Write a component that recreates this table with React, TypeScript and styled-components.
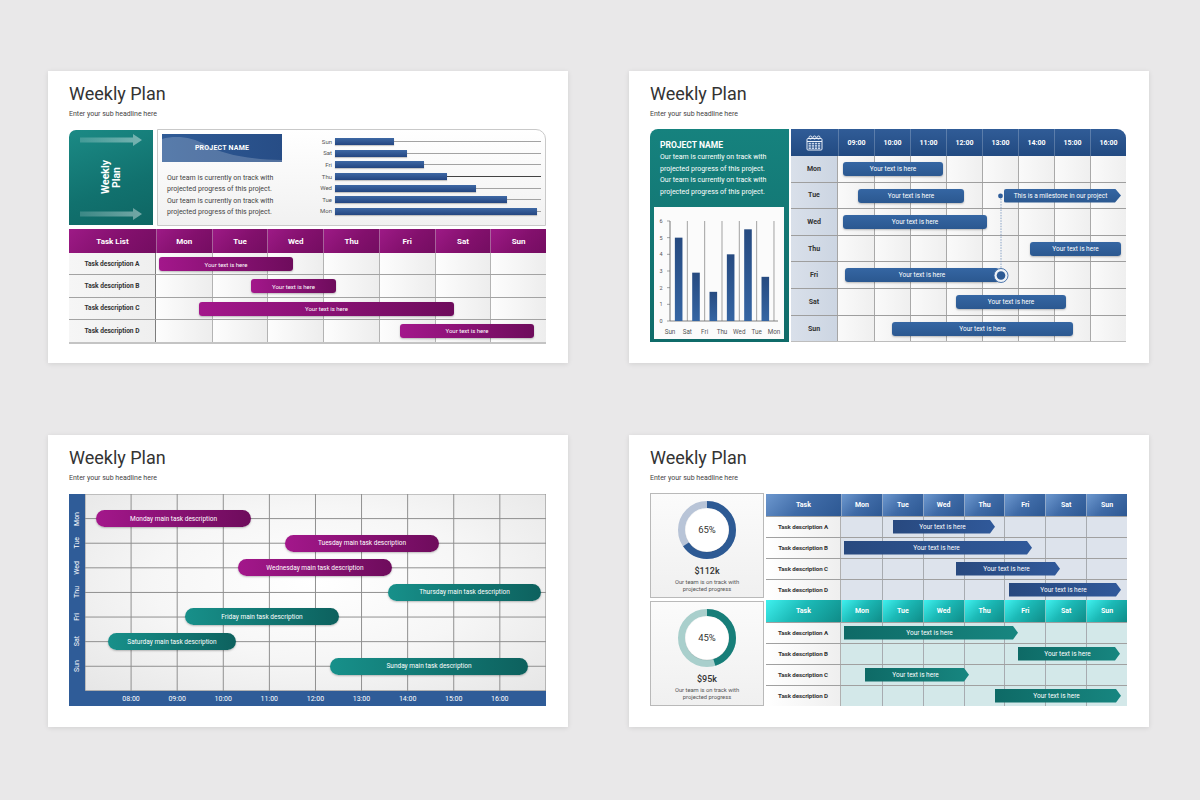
import React from "react";
import styled, { createGlobalStyle, css } from "styled-components";

const GlobalStyle = createGlobalStyle`
  html, body {
    margin: 0;
    padding: 0;
  }
  body {
    background: #e9e8e9;
    font-family: Roboto, "Liberation Sans", Arial, sans-serif;
    color: #333;
  }
  * {
    box-sizing: border-box;
  }
`;

const PURPLE = "linear-gradient(90deg, #a3178b 0%, #6e0c5c 100%)";
const TEAL = "linear-gradient(90deg, #17908a 0%, #0d615e 100%)";

const Page = styled.div`
  width: 1200px;
  height: 800px;
  display: grid;
  grid-template-columns: 520px 520px;
  grid-template-rows: 292px 292px;
  column-gap: 61px;
  row-gap: 72px;
  padding: 71px 0 0 48px;
`;

const Slide = styled.section`
  background: #fff;
  box-shadow: 0 1px 5px rgba(0, 0, 0, 0.1);
  padding: 12px 22px 0 21px;
  display: flex;
  flex-direction: column;
`;

const Title = styled.h1`
  margin: 0;
  font-size: 18px;
  font-weight: 400;
  line-height: 22px;
  color: #333;
`;

const Subtitle = styled.p`
  margin: 4px 0 10px;
  font-size: 7px;
  line-height: 10px;
  color: #444;
`;

/* ---------- slide 1 ---------- */

const TopRow = styled.div`
  display: flex;
  gap: 4px;
  height: 97px;
`;

const SidePanel = styled.div`
  width: 84px;
  margin: 1px 0;
  border-radius: 7px 0 0 0;
  background: linear-gradient(160deg, #1b8a85 0%, #11716e 60%, #0e6663 100%);
  display: flex;
  flex-direction: column;
  justify-content: space-between;
  padding: 4px 0 5px 11px;
`;

const VerticalTitle = styled.div`
  writing-mode: vertical-rl;
  transform: rotate(180deg);
  align-self: center;
  margin-left: -11px;
  color: #fff;
  font-weight: 700;
  font-size: 10.5px;
  line-height: 11px;
  text-align: center;
`;

const InfoBox = styled.div`
  flex: 1;
  border: 1px solid #c9c9c9;
  border-radius: 0 10px 0 0;
  background: linear-gradient(180deg, #ffffff 0%, #f1f1f1 100%);
  padding: 4px;
  display: flex;
  align-items: flex-start;
`;

const InfoText = styled.div`
  width: 120px;
`;

const Banner = styled.div`
  position: relative;
  height: 28px;
  background: linear-gradient(90deg, #2f5b96, #274d86);
  color: #fff;
  font-size: 7px;
  font-weight: 700;
  letter-spacing: 0.2px;
  display: flex;
  align-items: center;
  justify-content: center;
  overflow: hidden;

  svg {
    position: absolute;
    inset: 0;
  }
  span {
    position: relative;
  }
`;

const Paragraph = styled.p<{ $light?: boolean }>`
  margin: 0;
  font-size: 7px;
  line-height: 11.6px;
  color: ${(p) => (p.$light ? "#fff" : "#444")};
`;

const InfoParagraph = styled(Paragraph)`
  margin-top: 10.5px;
  padding-left: 5px;
`;

const HBarChart = styled.div`
  width: 231px;
  margin: 2px 0 0 28px;
  display: flex;
  flex-direction: column;
`;

const HBarRow = styled.div`
  display: grid;
  grid-template-columns: 22px 206px;
  column-gap: 3px;
  height: 11.6px;
  align-items: center;
`;

const HBarLabel = styled.span`
  font-size: 6px;
  color: #555;
  text-align: right;
  line-height: 1;
`;

const HBarTrack = styled.div<{ $dark?: boolean }>`
  height: 7px;
  background: linear-gradient(
      ${(p) => (p.$dark ? "#444" : "#a3a3a3")},
      ${(p) => (p.$dark ? "#444" : "#a3a3a3")}
    )
    center / 100% 1px no-repeat;
`;

const HBarFill = styled.div<{ $w: number }>`
  width: ${(p) => p.$w}px;
  height: 7px;
  background: linear-gradient(180deg, #3e68a4 0%, #244681 100%);
  box-shadow: 0 1px 1px rgba(0, 0, 0, 0.2);
`;

const TaskTable = styled.div`
  margin-top: 3px;
  border-bottom: 2px solid #c4c4c4;
`;

const dayGrid = css`
  display: grid;
  grid-template-columns: 87px repeat(7, 1fr);
`;

const TaskHead = styled.div`
  ${dayGrid};
  height: 24px;
`;

const TaskHeadCell = styled.div`
  background: linear-gradient(135deg, #9d1a86 0%, #83106d 55%, #740d61 100%);
  border-left: 1px solid rgba(255, 255, 255, 0.35);
  color: #fff;
  font-size: 8px;
  font-weight: 700;
  display: flex;
  align-items: center;
  justify-content: center;

  &:first-child {
    border-left: none;
  }
`;

const TaskRow = styled.div`
  ${dayGrid};
  position: relative;
  height: 22.3px;
  border-bottom: 1px solid #a3a3a3;

  &:last-child {
    border-bottom: none;
  }
`;

const TaskLabel = styled.div`
  background: linear-gradient(90deg, #f6f6f6, #efefef);
  border-right: 1px solid #7d7d7d;
  font-size: 6.6px;
  font-weight: 700;
  color: #333;
  display: flex;
  align-items: center;
  justify-content: center;
`;

const TaskCell = styled.div`
  background: linear-gradient(90deg, #fdfdfd 0%, #ededed 100%);
  border-left: 1px solid #b3b3b3;

  &:nth-child(2) {
    border-left: none;
  }
`;

const RoundBar = styled.div<{ $left: number; $width: number; $top: number }>`
  position: absolute;
  top: ${(p) => p.$top}px;
  left: ${(p) => p.$left}px;
  width: ${(p) => p.$width}px;
  height: 14px;
  border-radius: 3px;
  color: #fff;
  font-size: 6px;
  display: flex;
  align-items: center;
  justify-content: center;
  box-shadow: 0 1px 2px rgba(0, 0, 0, 0.25);
`;

const PurpleBar = styled(RoundBar)`
  background: ${PURPLE};
`;

/* ---------- slide 2 ---------- */

const SplitBody = styled.div`
  display: flex;
  gap: 2px;
  height: 213px;
`;

const ProjectPanel = styled.div`
  width: 139px;
  border-radius: 8px 0 0 0;
  background: linear-gradient(180deg, #16827e 0%, #0f6b69 100%);
  display: flex;
  flex-direction: column;
  padding: 10px 5px 3px 4px;
`;

const PanelTitle = styled.div`
  padding-left: 6px;
  font-size: 8.5px;
  font-weight: 700;
  line-height: 12px;
  color: #fff;
  margin-bottom: 1px;
`;

const PanelText = styled(Paragraph)`
  padding-left: 6px;
`;

const ChartBox = styled.div`
  margin-top: auto;
  height: 132px;
  background: #fbfbfb;
`;

const TimeGrid = styled.div`
  position: relative;
  width: 335px;
  border-radius: 0 9px 0 0;
  overflow: hidden;
  border-bottom: 1px solid #bdbdbd;
`;

const hourGrid = css`
  display: grid;
  grid-template-columns: 47px repeat(8, 36px);
`;

const TimeHead = styled.div`
  ${hourGrid};
  height: 27px;
  background: linear-gradient(180deg, #305c97 0%, #224a81 100%);
`;

const TimeHeadCell = styled.div`
  border-left: 1px solid rgba(255, 255, 255, 0.22);
  color: #fff;
  font-size: 7px;
  font-weight: 700;
  display: flex;
  align-items: center;
  justify-content: center;

  &:first-child {
    border-left: none;
  }
`;

const TimeRow = styled.div`
  ${hourGrid};
  position: relative;
  height: 26.6px;
  border-bottom: 1px solid #9e9e9e;

  &:last-of-type {
    border-bottom: none;
  }
`;

const DayCell = styled.div`
  background: linear-gradient(90deg, #d9e0ea, #ccd5e2);
  border-right: 1px solid #a6a6a6;
  font-size: 7px;
  font-weight: 700;
  color: #333;
  display: flex;
  align-items: center;
  justify-content: center;
`;

const HourCell = styled.div`
  background: linear-gradient(90deg, #fafafa 0%, #efefef 100%);
  border-left: 1px solid #a9a9a9;

  &:nth-child(2) {
    border-left: none;
  }
`;

const BlueBar = styled(RoundBar)`
  background: linear-gradient(180deg, #3566a3 0%, #2b5890 100%);
  font-size: 6.5px;
`;

const MilestoneBar = styled(BlueBar)`
  border-radius: 2px 0 0 2px;
  clip-path: polygon(0 0, calc(100% - 6px) 0, 100% 50%, calc(100% - 6px) 100%, 0 100%);
  padding-right: 4px;
`;

const Overlay = styled.svg`
  position: absolute;
  left: 0;
  top: 0;
  pointer-events: none;
`;

/* ---------- slide 3 ---------- */

const Frame = styled.div`
  margin-top: 1px;
  display: grid;
  grid-template-columns: 16px 461px;
  grid-template-rows: 197px 15px;
  background: #2f5c98;
`;

const DayAxis = styled.div`
  display: flex;
  flex-direction: column;
  padding-top: 12.3px;
`;

const DayTick = styled.div`
  height: 24.6px;
  display: flex;
  align-items: center;
  justify-content: center;

  span {
    writing-mode: vertical-rl;
    transform: rotate(180deg);
    color: #fff;
    font-size: 7px;
  }
`;

const Plot = styled.div`
  display: flex;
  flex-direction: column;
  padding-top: 12.3px;
  background-color: #f3f3f3;
  background-image: linear-gradient(90deg, #8e8e8e 0 1px, transparent 1px),
    linear-gradient(180deg, #8e8e8e 0 1px, transparent 1px),
    radial-gradient(ellipse at 50% 45%, #ffffff 0%, #f6f6f6 50%, #e6e6e6 100%);
  background-size: 46.1px 100%, 100% 24.62px, 100% 100%;
  background-position: -0.5px 0, 0 -0.5px, 0 0;
`;

const PlotRow = styled.div`
  height: 24.6px;
  display: flex;
  align-items: center;
`;

const Pill = styled.div<{ $left: number; $width: number; $tone: "purple" | "teal" }>`
  margin-left: ${(p) => p.$left}px;
  width: ${(p) => p.$width}px;
  height: 17px;
  border-radius: 9px;
  background: ${(p) => (p.$tone === "purple" ? PURPLE : TEAL)};
  color: #fff;
  font-size: 6.5px;
  display: flex;
  align-items: center;
  justify-content: center;
  box-shadow: 0 1px 2px rgba(0, 0, 0, 0.25);
`;

const HourAxis = styled.div`
  display: flex;
  padding-left: 23px;
  align-items: center;

  span {
    width: 46.1px;
    flex: none;
    text-align: center;
    color: #fff;
    font-size: 7px;
  }
`;

/* ---------- slide 4 ---------- */

const CardColumn = styled.div`
  width: 114px;
  display: flex;
  flex-direction: column;
  gap: 3px;
`;

const DonutCard = styled.div`
  height: 105px;
  border: 1px solid #b9b9b9;
  background: linear-gradient(180deg, #fbfbfb 0%, #f0f0f0 100%);
  display: flex;
  flex-direction: column;
  align-items: center;
  padding-top: 6px;
`;

const Amount = styled.div`
  margin-top: 6px;
  font-size: 9px;
  font-weight: 500;
  line-height: 11px;
  color: #333;
`;

const CardNote = styled.div`
  margin-top: 2px;
  font-size: 5.8px;
  line-height: 7px;
  color: #555;
  text-align: center;
`;

const TablesColumn = styled.div`
  width: 361px;
  margin-top: 1px;
  border-bottom: 1px solid #a0a0a0;
`;

const weekGrid = css`
  display: grid;
  grid-template-columns: 75px repeat(7, 1fr);
`;

const WeekHead = styled.div`
  ${weekGrid};
  height: 22px;
`;

const WeekHeadCell = styled.div<{ $tone: "blue" | "teal" }>`
  background: ${(p) =>
    p.$tone === "blue"
      ? "linear-gradient(135deg, #6d98cf 0%, #3f6ba7 50%, #2d5893 100%)"
      : "linear-gradient(135deg, #3ff1ef 0%, #1cbab7 45%, #0f8c88 100%)"};
  border-left: 1px solid rgba(255, 255, 255, 0.45);
  color: #fff;
  font-size: 7px;
  font-weight: 700;
  display: flex;
  align-items: center;
  justify-content: center;

  &:first-child {
    border-left: none;
  }
`;

const WeekRow = styled.div`
  ${weekGrid};
  position: relative;
  height: 21px;
  border-top: 1px solid #a0a0a0;
`;

const WeekLabel = styled.div`
  background: linear-gradient(90deg, #ffffff, #efefef);
  border-right: 1px solid #b0b0b0;
  font-size: 6.2px;
  font-weight: 700;
  letter-spacing: -0.1px;
  color: #333;
  display: flex;
  align-items: center;
  justify-content: center;
`;

const WeekCell = styled.div<{ $tone: "blue" | "teal" }>`
  background: ${(p) => (p.$tone === "blue" ? "#dde3ec" : "#d3e8e9")};
  border-left: 1px solid #a7abb0;

  &:nth-child(2) {
    border-left: none;
  }
`;

const ArrowBar = styled.div<{ $left: number; $width: number; $tone: "blue" | "teal" }>`
  position: absolute;
  top: 3px;
  left: ${(p) => p.$left}px;
  width: ${(p) => p.$width}px;
  height: 13.5px;
  background: ${(p) =>
    p.$tone === "blue"
      ? "linear-gradient(90deg, #28497f 0%, #30599a 100%)"
      : "linear-gradient(90deg, #0e6a66 0%, #178680 100%)"};
  clip-path: polygon(0 0, calc(100% - 5px) 0, 100% 50%, calc(100% - 5px) 100%, 0 100%);
  color: #fff;
  font-size: 6.5px;
  display: flex;
  align-items: center;
  justify-content: center;
  padding-right: 3px;
`;

/* ---------- data ---------- */

const DAYS = ["Mon", "Tue", "Wed", "Thu", "Fri", "Sat", "Sun"];
const HOURS = ["09:00", "10:00", "11:00", "12:00", "13:00", "14:00", "15:00", "16:00"];

const hBars = [
  { label: "Sun", w: 59 },
  { label: "Sat", w: 72 },
  { label: "Fri", w: 89 },
  { label: "Thu", w: 112, dark: true },
  { label: "Wed", w: 141 },
  { label: "Tue", w: 172 },
  { label: "Mon", w: 202 },
];

const taskRows = [
  { label: "Task description A", left: 90, width: 134 },
  { label: "Task description B", left: 182, width: 85 },
  { label: "Task description C", left: 130, width: 255 },
  { label: "Task description D", left: 331, width: 134 },
];

const timeRows = [
  { day: "Mon", bars: [{ left: 52, width: 100 }] },
  { day: "Tue", bars: [{ left: 67, width: 106 }], milestone: { left: 213, width: 117 } },
  { day: "Wed", bars: [{ left: 52, width: 144 }] },
  { day: "Thu", bars: [{ left: 239, width: 91 }] },
  { day: "Fri", bars: [{ left: 54, width: 154 }] },
  { day: "Sat", bars: [{ left: 165, width: 110 }] },
  { day: "Sun", bars: [{ left: 101, width: 181 }] },
];

const pills: { day: string; text: string; left: number; width: number; tone: "purple" | "teal" }[] = [
  { day: "Mon", text: "Monday main task description", left: 11, width: 155, tone: "purple" },
  { day: "Tue", text: "Tuesday main task description", left: 200, width: 154, tone: "purple" },
  { day: "Wed", text: "Wednesday main task description", left: 153, width: 154, tone: "purple" },
  { day: "Thu", text: "Thursday main task description", left: 303, width: 153, tone: "teal" },
  { day: "Fri", text: "Friday main task description", left: 100, width: 154, tone: "teal" },
  { day: "Sat", text: "Saturday main task description", left: 23, width: 128, tone: "teal" },
  { day: "Sun", text: "Sunday main task description", left: 245, width: 198, tone: "teal" },
];

const weekTables: {
  tone: "blue" | "teal";
  pct: number;
  amount: string;
  bars: { left: number; width: number }[];
}[] = [
  {
    tone: "blue",
    pct: 65,
    amount: "$112k",
    bars: [
      { left: 127, width: 102 },
      { left: 78, width: 188 },
      { left: 190, width: 104 },
      { left: 243, width: 112 },
    ],
  },
  {
    tone: "teal",
    pct: 45,
    amount: "$95k",
    bars: [
      { left: 78, width: 174 },
      { left: 252, width: 102 },
      { left: 99, width: 104 },
      { left: 229, width: 126 },
    ],
  },
];

/* ---------- drawings ---------- */

const PanelArrow = () => (
  <svg width="62" height="12" viewBox="0 0 62 12">
    <defs>
      <linearGradient id="arrowFade" x1="0" y1="0" x2="1" y2="0">
        <stop offset="0" stopColor="#fff" stopOpacity="0.18" />
        <stop offset="1" stopColor="#fff" stopOpacity="0.42" />
      </linearGradient>
    </defs>
    <path d="M0 3.5 H53 V0 L62 6 L53 12 V8.5 H0 Z" fill="url(#arrowFade)" />
  </svg>
);

const CalendarIcon = () => (
  <svg width="17" height="16" viewBox="0 0 17 16" fill="none" stroke="#e9eff8" strokeWidth="1">
    <rect x="1" y="3.5" width="15" height="11.5" rx="1" />
    <line x1="1" y1="6.5" x2="16" y2="6.5" />
    <circle cx="4.5" cy="2.5" r="1.5" />
    <circle cx="8.5" cy="2.5" r="1.5" />
    <circle cx="12.5" cy="2.5" r="1.5" />
    {[0, 1, 2, 3].map((c) =>
      [0, 1, 2].map((r) => (
        <rect
          key={`${c}-${r}`}
          x={2.6 + c * 3.1}
          y={7.8 + r * 2.3}
          width="2.3"
          height="1.6"
          fill="#c9d6ea"
          stroke="none"
        />
      ))
    )}
  </svg>
);

const chartValues = [5, 2.9, 1.75, 4, 5.5, 2.65];
const chartLabels = ["Sun", "Sat", "Fri", "Thu", "Wed", "Tue", "Mon"];

const ColumnChart = () => {
  const x0 = 16;
  const step = 17.33;
  const base = 114;
  const unit = 16.67;
  return (
    <svg width="130" height="132" viewBox="0 0 130 132">
      <defs>
        <linearGradient id="colFill" x1="0" y1="0" x2="0" y2="1">
          <stop offset="0" stopColor="#264a80" />
          <stop offset="1" stopColor="#3565a3" />
        </linearGradient>
      </defs>
      {chartLabels.map((_, i) => (
        <line
          key={i}
          x1={x0 + step * i}
          x2={x0 + step * i}
          y1={14}
          y2={base}
          stroke={i === 0 ? "#555" : "#8c8c8c"}
          strokeWidth="0.8"
        />
      ))}
      <line x1={x0} x2={124} y1={base} y2={base} stroke="#666" strokeWidth="0.8" />
      {[0, 1, 2, 3, 4, 5, 6].map((v) => (
        <g key={v}>
          <line x1={13} x2={x0} y1={base - unit * v} y2={base - unit * v} stroke="#666" strokeWidth="0.6" />
          <text
            x={7}
            y={base - unit * v + 2}
            fontSize="5.5"
            fill="#555"
            textAnchor="middle"
            fontFamily="Roboto, sans-serif"
          >
            {v}
          </text>
        </g>
      ))}
      {chartValues.map((v, i) => (
        <rect
          key={i}
          x={x0 + step * (i + 0.5) - 3.8}
          y={base - unit * v}
          width="7.6"
          height={unit * v}
          fill="url(#colFill)"
        />
      ))}
      {chartLabels.map((l, i) => (
        <text
          key={l}
          x={x0 + step * i}
          y={126.5}
          fontSize="6.3"
          fill="#555"
          textAnchor="middle"
          fontFamily="Roboto, sans-serif"
        >
          {l}
        </text>
      ))}
    </svg>
  );
};

const Donut = ({ pct, tone }: { pct: number; tone: "blue" | "teal" }) => {
  const r = 25.5;
  const c = 2 * Math.PI * r;
  const main = tone === "blue" ? "#2d5a94" : "#177e79";
  const rest = tone === "blue" ? "#b8c4d7" : "#a9cfcc";
  return (
    <svg width="60" height="60" viewBox="0 0 60 60">
      <circle cx="30" cy="30" r={r} fill="none" stroke={rest} strokeWidth="7" />
      <circle
        cx="30"
        cy="30"
        r={r}
        fill="none"
        stroke={main}
        strokeWidth="7"
        strokeDasharray={`${(c * pct) / 100} ${c}`}
        transform="rotate(-90 30 30)"
      />
      <circle cx="30" cy="30.6" r="22" fill="#000" opacity="0.08" />
      <circle cx="30" cy="30" r="21.6" fill="#fff" />
      <text
        x="30"
        y="33.3"
        fontSize="9.5"
        fill="#333"
        textAnchor="middle"
        fontFamily="Roboto, sans-serif"
      >
        {pct}%
      </text>
    </svg>
  );
};

/* ---------- slides ---------- */

const SlideHeader = () => (
  <>
    <Title>Weekly Plan</Title>
    <Subtitle>Enter your sub headline here</Subtitle>
  </>
);

const TaskListSlide = () => (
  <Slide>
    <SlideHeader />
    <TopRow>
      <SidePanel>
        <PanelArrow />
        <VerticalTitle>
          Weekly
          <br />
          Plan
        </VerticalTitle>
        <PanelArrow />
      </SidePanel>
      <InfoBox>
        <InfoText>
          <Banner>
            <svg width="120" height="28" viewBox="0 0 120 28">
              <path
                d="M0 5 C 14 1, 30 3, 44 11 C 60 20, 84 25, 120 26 L120 28 L0 28 Z"
                fill="#ffffff"
                opacity="0.2"
              />
            </svg>
            <span>PROJECT NAME</span>
          </Banner>
          <InfoParagraph>
            Our team is currently on track with
            <br />
            projected progress of this project.
            <br />
            Our team is currently on track with
            <br />
            projected progress of this project.
          </InfoParagraph>
        </InfoText>
        <HBarChart>
          {hBars.map((b) => (
            <HBarRow key={b.label}>
              <HBarLabel>{b.label}</HBarLabel>
              <HBarTrack $dark={b.dark}>
                <HBarFill $w={b.w} />
              </HBarTrack>
            </HBarRow>
          ))}
        </HBarChart>
      </InfoBox>
    </TopRow>
    <TaskTable>
      <TaskHead>
        <TaskHeadCell>Task List</TaskHeadCell>
        {DAYS.map((d) => (
          <TaskHeadCell key={d}>{d}</TaskHeadCell>
        ))}
      </TaskHead>
      {taskRows.map((r) => (
        <TaskRow key={r.label}>
          <TaskLabel>{r.label}</TaskLabel>
          {DAYS.map((d) => (
            <TaskCell key={d} />
          ))}
          <PurpleBar $left={r.left} $width={r.width} $top={4}>
            Your text is here
          </PurpleBar>
        </TaskRow>
      ))}
    </TaskTable>
  </Slide>
);

const TimelineSlide = () => (
  <Slide>
    <SlideHeader />
    <SplitBody>
      <ProjectPanel>
        <PanelTitle>PROJECT NAME</PanelTitle>
        <PanelText $light>
          Our team is currently on track with
          <br />
          projected progress of this project.
          <br />
          Our team is currently on track with
          <br />
          projected progress of this project.
        </PanelText>
        <ChartBox>
          <ColumnChart />
        </ChartBox>
      </ProjectPanel>
      <TimeGrid>
        <TimeHead>
          <TimeHeadCell>
            <CalendarIcon />
          </TimeHeadCell>
          {HOURS.map((h) => (
            <TimeHeadCell key={h}>{h}</TimeHeadCell>
          ))}
        </TimeHead>
        {timeRows.map((r) => (
          <TimeRow key={r.day}>
            <DayCell>{r.day}</DayCell>
            {HOURS.map((h) => (
              <HourCell key={h} />
            ))}
            {r.bars.map((b, i) => (
              <BlueBar key={i} $left={b.left} $width={b.width} $top={6}>
                Your text is here
              </BlueBar>
            ))}
            {r.milestone && (
              <MilestoneBar $left={r.milestone.left} $width={r.milestone.width} $top={6}>
                This is a milestone in our project
              </MilestoneBar>
            )}
          </TimeRow>
        ))}
        <Overlay width="335" height="213" viewBox="0 0 335 213">
          <line x1="210" y1="67" x2="210" y2="139" stroke="#6f8fbb" strokeWidth="0.8" strokeDasharray="1.5 1.2" />
          <circle cx="209.5" cy="67" r="2.4" fill="#2f5e9b" />
          <circle cx="210" cy="146.5" r="7" fill="#eef2f7" stroke="#3d6aa5" strokeWidth="0.9" />
          <circle cx="210" cy="146.5" r="4.3" fill="#2d5a94" />
        </Overlay>
      </TimeGrid>
    </SplitBody>
  </Slide>
);

const PillSlide = () => (
  <Slide>
    <SlideHeader />
    <Frame>
      <DayAxis>
        {DAYS.map((d) => (
          <DayTick key={d}>
            <span>{d}</span>
          </DayTick>
        ))}
      </DayAxis>
      <Plot>
        {pills.map((p) => (
          <PlotRow key={p.day}>
            <Pill $left={p.left} $width={p.width} $tone={p.tone}>
              {p.text}
            </Pill>
          </PlotRow>
        ))}
      </Plot>
      <div />
      <HourAxis>
        {["08:00", ...HOURS].map((h) => (
          <span key={h}>{h}</span>
        ))}
      </HourAxis>
    </Frame>
  </Slide>
);

const ProgressSlide = () => (
  <Slide>
    <SlideHeader />
    <SplitBody>
      <CardColumn>
        {weekTables.map((t) => (
          <DonutCard key={t.tone}>
            <Donut pct={t.pct} tone={t.tone} />
            <Amount>{t.amount}</Amount>
            <CardNote>
              Our team is on track with
              <br />
              projected progress
            </CardNote>
          </DonutCard>
        ))}
      </CardColumn>
      <TablesColumn>
        {weekTables.map((t) => (
          <div key={t.tone}>
            <WeekHead>
              <WeekHeadCell $tone={t.tone}>Task</WeekHeadCell>
              {DAYS.map((d) => (
                <WeekHeadCell key={d} $tone={t.tone}>
                  {d}
                </WeekHeadCell>
              ))}
            </WeekHead>
            {t.bars.map((b, i) => (
              <WeekRow key={i}>
                <WeekLabel>Task description {"ABCD"[i]}</WeekLabel>
                {DAYS.map((d) => (
                  <WeekCell key={d} $tone={t.tone} />
                ))}
                <ArrowBar $left={b.left} $width={b.width} $tone={t.tone}>
                  Your text is here
                </ArrowBar>
              </WeekRow>
            ))}
          </div>
        ))}
      </TablesColumn>
    </SplitBody>
  </Slide>
);

const App = () => (
  <>
    <GlobalStyle />
    <Page>
      <TaskListSlide />
      <TimelineSlide />
      <PillSlide />
      <ProgressSlide />
    </Page>
  </>
);

export default App;
